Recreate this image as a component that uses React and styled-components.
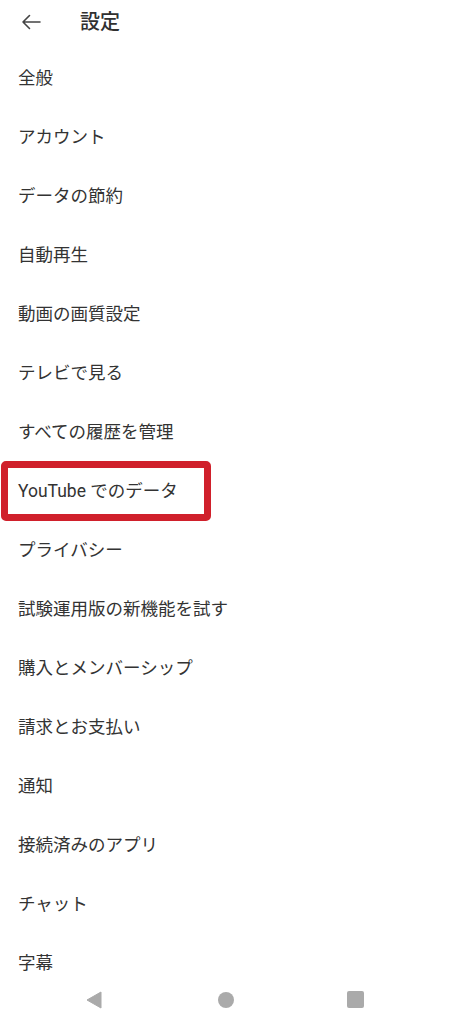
import React from "react";
import styled, { createGlobalStyle } from "styled-components";

const Global = createGlobalStyle`
  html, body { margin: 0; padding: 0; background: #fff; }
  body { font-family: Roboto, "Noto Sans CJK JP", sans-serif; }
`;

const Screen = styled.div`
  width: 452px;
  height: 1024px;
  display: flex;
  flex-direction: column;
  background: #fff;
  overflow: hidden;
`;

const Header = styled.header`
  height: 47px;
  flex: 0 0 47px;
  display: flex;
  align-items: center;
  padding-left: 20px;
  box-sizing: border-box;
  padding-bottom: 3px;
`;

const BackButton = styled.button`
  width: 22px;
  height: 22px;
  padding: 0;
  border: none;
  background: none;
  display: flex;
  align-items: center;
  justify-content: center;
  color: #444;
`;

const Title = styled.h1`
  margin: 0 0 0 38px;
  font-size: 20px;
  font-weight: 500;
  color: #303030;
  line-height: 1;
`;

const List = styled.ul`
  list-style: none;
  margin: 0;
  padding: 0;
  flex: 1 1 auto;
  overflow: hidden;
`;

const Row = styled.li`
  position: relative;
  height: 59px;
  display: flex;
  align-items: center;
  padding-left: 18px;
  font-size: 17.5px;
  color: #333;

  ${(p) =>
    p.$highlight &&
    `
    &::after {
      content: "";
      position: absolute;
      left: 1px;
      top: 1px;
      width: 210px;
      height: 60px;
      box-sizing: border-box;
      border: 7px solid #d0202b;
      border-radius: 5px;
    }
  `}
`;

const NavBar = styled.nav`
  flex: 0 0 49px;
  height: 49px;
  display: flex;
  align-items: center;
  gap: 116px;
  padding-left: 86px;
  box-sizing: border-box;
  background: #fff;
`;

const Circle = styled.span`
  width: 16px;
  height: 16px;
  border-radius: 50%;
  background: #aaa;
`;

const Square = styled.span`
  width: 17px;
  height: 17px;
  border-radius: 2px;
  background: #aaa;
  margin-left: -3px;
`;

const items = [
  "全般",
  "アカウント",
  "データの節約",
  "自動再生",
  "動画の画質設定",
  "テレビで見る",
  "すべての履歴を管理",
  "YouTube でのデータ",
  "プライバシー",
  "試験運用版の新機能を試す",
  "購入とメンバーシップ",
  "請求とお支払い",
  "通知",
  "接続済みのアプリ",
  "チャット",
  "字幕",
];

export default function App() {
  return (
    <Screen>
      <Global />
      <Header>
        <BackButton aria-label="戻る">
          <svg width="20" height="16" viewBox="0 0 20 16" fill="none">
            <path d="M19 8H2M8.5 1.5L2 8l6.5 6.5" stroke="#444" strokeWidth="1.6" strokeLinecap="round" strokeLinejoin="round" />
          </svg>
        </BackButton>
        <Title>設定</Title>
      </Header>
      <List>
        {items.map((t, i) => (
          <Row key={t} $highlight={i === 7}>
            {t}
          </Row>
        ))}
      </List>
      <NavBar>
        <svg width="16" height="18" viewBox="0 0 16 18">
          <path d="M15 1 L1 9 L15 17 Z" fill="#aaa" stroke="#aaa" strokeWidth="1" strokeLinejoin="round" />
        </svg>
        <Circle />
        <Square />
      </NavBar>
    </Screen>
  );
}
